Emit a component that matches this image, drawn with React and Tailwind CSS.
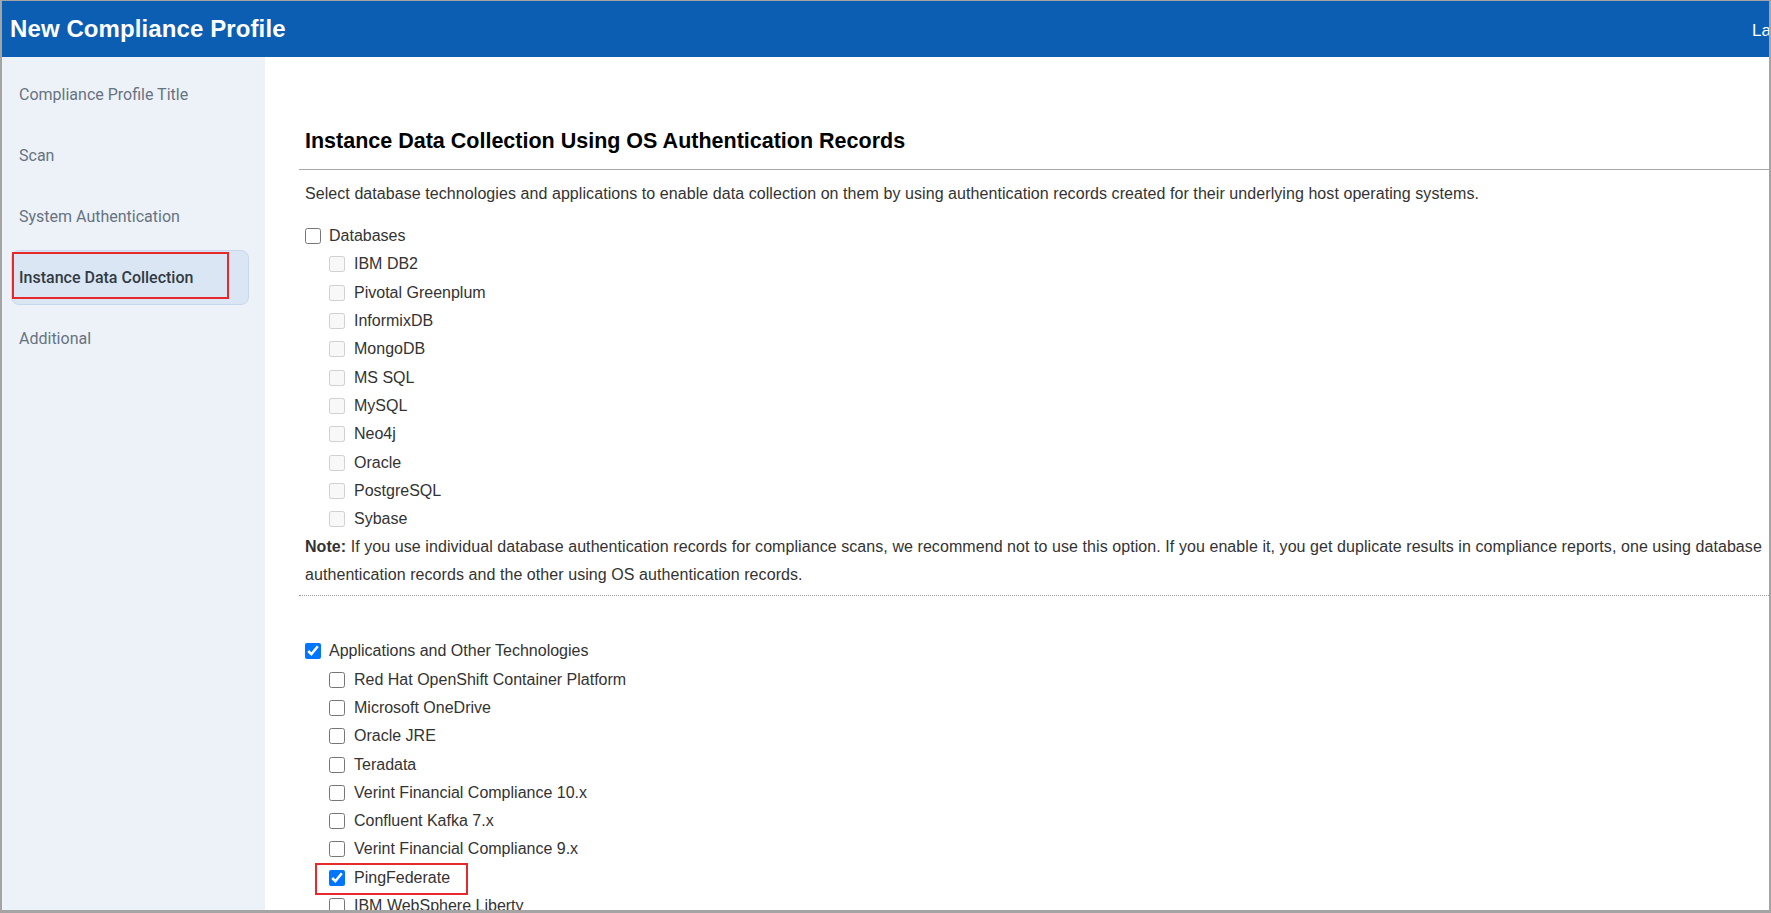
const NAV = [
  'Compliance Profile Title',
  'Scan',
  'System Authentication',
  'Instance Data Collection',
  'Additional',
];

const DATABASES = [
  'IBM DB2',
  'Pivotal Greenplum',
  'InformixDB',
  'MongoDB',
  'MS SQL',
  'MySQL',
  'Neo4j',
  'Oracle',
  'PostgreSQL',
  'Sybase',
];

const APPS = [
  { name: 'Red Hat OpenShift Container Platform' },
  { name: 'Microsoft OneDrive' },
  { name: 'Oracle JRE' },
  { name: 'Teradata' },
  { name: 'Verint Financial Compliance 10.x' },
  { name: 'Confluent Kafka 7.x' },
  { name: 'Verint Financial Compliance 9.x' },
  { name: 'PingFederate', checked: true, marked: true },
  { name: 'IBM WebSphere Liberty' },
];

function CheckRow({ label, checked, disabled, indent, marked }) {
  return (
    <label className={`relative flex items-center h-[28.3px] shrink-0 ${indent ? 'pl-[24px]' : ''}`}>
      {marked && (
        <span className="absolute left-[10px] top-[-1px] w-[153px] h-[32px] border-2 border-[#e8292b]" />
      )}
      <input
        type="checkbox"
        defaultChecked={checked}
        disabled={disabled}
        className="m-0 w-4 h-4 shrink-0"
      />
      <span className={`${indent ? 'ml-[9px]' : 'ml-[8px]'} text-[16px] leading-[20px] text-[#333333] whitespace-nowrap`}>{label}</span>
    </label>
  );
}

export default function App() {
  return (
    <div
      className="h-[913px] w-full flex flex-col overflow-hidden border-t border-l-2 border-r-2 border-b-[3px] border-[#a4a4a4] bg-white"
      style={{ fontFamily: "'Liberation Sans', Arial, sans-serif" }}
    >
      {/* header */}
      <div className="h-[56px] shrink-0 bg-[#0b5eb2] flex items-center justify-between pl-[8px] text-white">
        <h1 className="text-[24px] font-bold leading-none tracking-[0.1px]">New Compliance Profile</h1>
        <span className="text-[17px] mr-[-2px] pt-[3px]">La</span>
      </div>

      <div className="flex flex-1 min-h-0">
        {/* side nav */}
        <div
          className="w-[263px] shrink-0 bg-[#edf2f9] pt-[7px] pl-[9px] pr-[16px]"
          style={{ fontFamily: "Roboto, 'Liberation Sans', sans-serif" }}
        >
          {NAV.map((item) => {
            const active = item === 'Instance Data Collection';
            return (
              <div key={item} className="h-[61px] flex items-center">
                {active ? (
                  <div className="relative w-full h-[55px] flex items-center rounded-lg border border-[#c7d8ee] bg-[#dae6f4] pl-[7px]">
                    <span className="absolute left-0 top-[1px] w-[217px] h-[47px] border-2 border-[#e8292b]" />
                    <span className="text-[16px] font-medium text-[#333a43]">{item}</span>
                  </div>
                ) : (
                  <span className="pl-[8px] text-[16px] text-[#677281]">{item}</span>
                )}
              </div>
            );
          })}
        </div>

        {/* main */}
        <div className="flex-1 min-w-0 pl-[34px] pt-[71px] flex flex-col">
          <h2 className="pl-[6px] text-[21.5px] leading-[26px] font-bold text-black">
            Instance Data Collection Using OS Authentication Records
          </h2>
          <div className="mt-[15px] border-t border-[#a8a8a8]" />
          <p className="mt-[10px] pl-[6px] text-[16px] leading-[28px] tracking-[0.07px] text-[#333333] whitespace-nowrap">
            Select database technologies and applications to enable data collection on them by using authentication records created for their underlying host operating systems.
          </p>

          <div className="mt-[14px] pl-[6px] flex flex-col">
            <CheckRow label="Databases" />
            {DATABASES.map((d) => (
              <CheckRow key={d} label={d} indent disabled />
            ))}
          </div>

          <p className="pl-[6px] pr-[4px] text-[16px] leading-[28px] tracking-[0.07px] text-[#333333]">
            <b>Note:</b> If you use individual database authentication records for compliance scans, we recommend not to use this option. If you enable it, you get duplicate results in compliance reports, one using database authentication records and the other using OS authentication records.
          </p>
          <div className="mt-[6px] border-t border-dotted border-[#9a9a9a]" />

          <div className="mt-[41px] pl-[6px] flex flex-col">
            <CheckRow label="Applications and Other Technologies" checked />
            {APPS.map((a) => (
              <CheckRow key={a.name} label={a.name} indent checked={a.checked} marked={a.marked} />
            ))}
          </div>
        </div>
      </div>
    </div>
  );
}
